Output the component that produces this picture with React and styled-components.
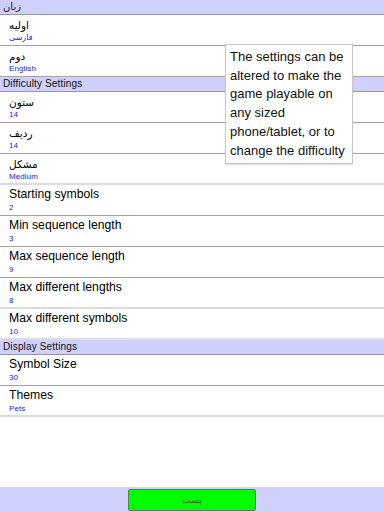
import React from "react";
import styled, { createGlobalStyle } from "styled-components";

const Global = createGlobalStyle`
  html, body { margin: 0; padding: 0; background: #fff; }
  body { font-family: "Liberation Sans", "DejaVu Sans", Arial, sans-serif; }
  #root { width: 384px; height: 512px; }
`;

const Page = styled.div`
  position: relative;
  width: 384px;
  height: 512px;
  display: flex;
  flex-direction: column;
  overflow: hidden;
  background: #fff;
`;

const List = styled.div`
  flex: 1;
  display: flex;
  flex-direction: column;
`;

const Header = styled.div`
  height: 14px;
  line-height: 14px;
  padding-left: 3px;
  background: #d0d0fc;
  border-bottom: 1px solid #9696a8;
  font-size: 10px;
  color: #111;
  letter-spacing: 0.15px;
`;

const Row = styled.div`
  height: ${(p) => (p.light ? "29px" : "30px")};
  border-bottom: ${(p) => (p.light ? "2px solid #dcdcdc" : "1px solid #a4a4a4")};
  padding-left: 9px;
  display: flex;
  flex-direction: column;
`;

const Title = styled.div`
  margin-top: ${(p) => (p.fa ? "3px" : "2px")};
  height: ${(p) => (p.fa ? "14px" : "15px")};
  line-height: ${(p) => (p.fa ? "14px" : "15px")};
  font-size: ${(p) => (p.fa ? "10.5px" : "12.2px")};
  color: #000;
  letter-spacing: 0;
`;

const Summary = styled.div`
  height: 11px;
  line-height: 11px;
  font-size: 8px;
  color: #2020f0;
  letter-spacing: 0.1px;
`;

const Footer = styled.div`
  height: 25px;
  background: #d0d0fc;
  display: flex;
  justify-content: center;
  align-items: flex-start;
  padding-top: 2px;
  box-sizing: border-box;
`;

const BackButton = styled.button`
  width: 128px;
  height: 22px;
  background: #00ff00;
  border: 1px solid #707070;
  border-radius: 2px;
  font-family: "Liberation Sans", "DejaVu Sans", sans-serif;
  font-size: 9px;
  color: #4a5a4a;
  padding: 0;
  cursor: pointer;
`;

const Tooltip = styled.div`
  position: absolute;
  left: 225px;
  top: 44px;
  width: 120px;
  padding: 3px 2px 3px 4px;
  background: #fff;
  border: 1px solid #c8c8c8;
  box-shadow: 0 1px 1px rgba(0, 0, 0, 0.12);
  font-size: 13px;
  line-height: 18.7px;
  color: #111;
`;

const sections = [
  {
    title: "زبان",
    rows: [
      { t: "اولیه", s: "فارسی", fa: true },
      { t: "دوم", s: "English", fa: true },
    ],
  },
  {
    title: "Difficulty Settings",
    rows: [
      { t: "ستون", s: "14", fa: true },
      { t: "ردیف", s: "14", fa: true },
      { t: "مشکل", s: "Medium", fa: true, light: true },
      { t: "Starting symbols", s: "2" },
      { t: "Min sequence length", s: "3" },
      { t: "Max sequence length", s: "9" },
      { t: "Max different lengths", s: "8", light: true },
      { t: "Max different symbols", s: "10", light: true },
    ],
  },
  {
    title: "Display Settings",
    rows: [
      { t: "Symbol Size", s: "30" },
      { t: "Themes", s: "Pets", light: true },
    ],
  },
];

export default function App() {
  return (
    <Page>
      <Global />
      <List>
        {sections.map((sec) => (
          <React.Fragment key={sec.title}>
            <Header>{sec.title}</Header>
            {sec.rows.map((r) => (
              <Row key={r.t} light={r.light}>
                <Title fa={r.fa}>{r.t}</Title>
                <Summary>{r.s}</Summary>
              </Row>
            ))}
          </React.Fragment>
        ))}
      </List>
      <Footer>
        <BackButton>پشت</BackButton>
      </Footer>
      <Tooltip>
        The settings can be altered to make the game playable on any sized
        phone/tablet, or to change the difficulty
      </Tooltip>
    </Page>
  );
}
